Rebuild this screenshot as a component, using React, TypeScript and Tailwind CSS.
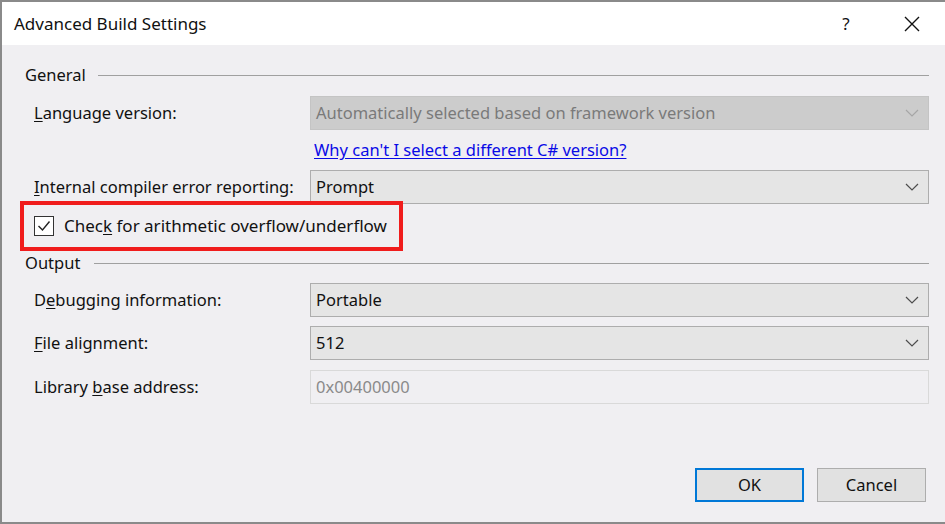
import React from 'react';

const font = { fontFamily: '"Noto Sans", "Open Sans", sans-serif' };

function Chevron({ muted }: { muted?: boolean }) {
  return (
    <svg width="14" height="8" viewBox="0 0 14 8" className="shrink-0">
      <path d="M1 1 L7 7 L13 1" fill="none" stroke={muted ? '#a6a6a6' : '#4d4d4d'} strokeWidth="1.2" />
    </svg>
  );
}

function Select({ value, disabled }: { value: string; disabled?: boolean }) {
  return (
    <div
      className={
        'flex-1 h-[34px] flex items-center justify-between pl-[5px] pr-[9px] border ' +
        (disabled ? 'bg-[#cccccc] border-[#c4c4c4] text-[#7a7a7a]' : 'bg-[#e5e5e5] border-[#adadad] text-[#111]')
      }
    >
      <span>{value}</span>
      <Chevron muted={disabled} />
    </div>
  );
}

function Label({ pre, key_, post }: { pre: string; key_: string; post: string }) {
  return (
    <div className="w-[276px] shrink-0 text-[#111]">
      {pre}
      <span className="underline underline-offset-2">{key_}</span>
      {post}
    </div>
  );
}

function Group({ title, lineFrom }: { title: string; lineFrom: string }) {
  return (
    <div className="flex items-center h-[26px]">
      <span className="text-[#111]">{title}</span>
      <div className={'flex-1 h-px bg-[#a0a0a0] ' + lineFrom}></div>
    </div>
  );
}

export default function App() {
  return (
    <div
      className="w-[945px] h-[524px] flex flex-col bg-[#f0eff2] border-l-2 border-t-2 border-b-2 border-[#8a8a8a] text-[16.5px] overflow-hidden"
      style={font}
    >
      {/* title bar */}
      <div className="h-[43px] bg-white flex items-center pl-[12px] shrink-0 text-[17px]">
        <span className="flex-1 text-[#111]">Advanced Build Settings</span>
        <span className="w-[20px] text-center text-[#111] mr-[48px]">?</span>
        <svg width="16" height="16" viewBox="0 0 16 16" className="mr-[25px]">
          <path d="M1 1 L15 15 M15 1 L1 15" stroke="#111" strokeWidth="1.4" />
        </svg>
      </div>

      <div className="flex-1 flex flex-col pl-[23px] pr-[16px] pt-[17px]">
        <Group title="General" lineFrom="ml-[12px]" />

        <div className="pl-[9px] flex flex-col">
          <div className="flex items-center mt-[8px]">
            <Label pre="" key_="L" post="anguage version:" />
            <Select value="Automatically selected based on framework version" disabled />
          </div>
          <div className="pl-[280px] mt-[6px] h-[28px] flex items-center">
            <span className="text-[#0a0ae6] underline underline-offset-2">Why can't I select a different C# version?</span>
          </div>
          <div className="flex items-center mt-[6px]">
            <Label pre="" key_="I" post="nternal compiler error reporting:" />
            <Select value="Prompt" />
          </div>
        </div>

        <div className="ml-[-5px] w-[383px] h-[50px] border-[4px] border-[#f01c1c] flex items-center pl-[10px] gap-[10px] mt-[-3px]">
          <div className="w-[20px] h-[20px] border border-[#333] bg-white flex items-center justify-center">
            <svg width="14" height="12" viewBox="0 0 14 12">
              <path d="M1.5 6 L5.5 10 L12.5 1.5" fill="none" stroke="#222" strokeWidth="1.4" />
            </svg>
          </div>
          <span className="text-[#111] text-[17px]">
            Chec<span className="underline underline-offset-2">k</span> for arithmetic overflow/underflow
          </span>
        </div>

        <div className="mt-[-1px]">
          <Group title="Output" lineFrom="ml-[14px]" />
        </div>

        <div className="pl-[9px] flex flex-col gap-[9px] mt-[7px]">
          <div className="flex items-center">
            <Label pre="D" key_="e" post="bugging information:" />
            <Select value="Portable" />
          </div>
          <div className="flex items-center">
            <Label pre="" key_="F" post="ile alignment:" />
            <Select value="512" />
          </div>
          <div className="flex items-center mt-[1px]">
            <Label pre="Library " key_="b" post="ase address:" />
            <div className="flex-1 h-[34px] flex items-center pl-[5px] border border-[#d9d9d9] bg-[#f0eff2] text-[#8a8a8a]">
              0x00400000
            </div>
          </div>
        </div>

        <div className="flex-1"></div>

        <div className="flex justify-end gap-[13px] mb-[20px] pr-[3px]">
          <button className="w-[109px] h-[34px] border-2 border-[#0078d7] bg-[#e1e1e1] text-[#111]">OK</button>
          <button className="w-[109px] h-[34px] border border-[#adadad] bg-[#e1e1e1] text-[#111]">Cancel</button>
        </div>
      </div>
    </div>
  );
}
